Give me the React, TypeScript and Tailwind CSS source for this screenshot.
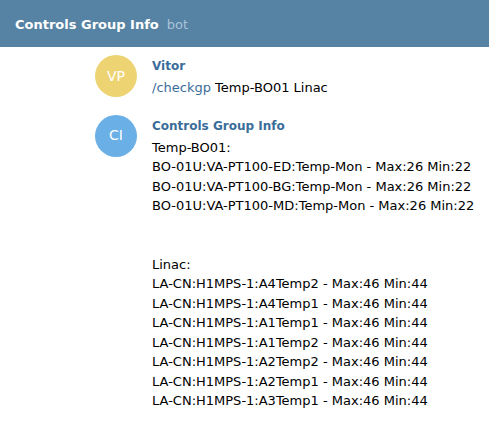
import React from 'react';

interface ChatMessage {
  initials: string;
  avatarColor: string;
  author: string;
  command?: string;
  lines: string[];
}

const messages: ChatMessage[] = [
  {
    initials: 'VP',
    avatarColor: 'bg-[#eed373]',
    author: 'Vitor',
    command: '/checkgp',
    lines: ['Temp-BO01 Linac'],
  },
  {
    initials: 'CI',
    avatarColor: 'bg-[#6aafe6]',
    author: 'Controls Group Info',
    lines: [
      'Temp-BO01:',
      'BO-01U:VA-PT100-ED:Temp-Mon - Max:26 Min:22',
      'BO-01U:VA-PT100-BG:Temp-Mon - Max:26 Min:22',
      'BO-01U:VA-PT100-MD:Temp-Mon - Max:26 Min:22',
      '',
      '',
      'Linac:',
      'LA-CN:H1MPS-1:A4Temp2 - Max:46 Min:44',
      'LA-CN:H1MPS-1:A4Temp1 - Max:46 Min:44',
      'LA-CN:H1MPS-1:A1Temp1 - Max:46 Min:44',
      'LA-CN:H1MPS-1:A1Temp2 - Max:46 Min:44',
      'LA-CN:H1MPS-1:A2Temp2 - Max:46 Min:44',
      'LA-CN:H1MPS-1:A2Temp1 - Max:46 Min:44',
      'LA-CN:H1MPS-1:A3Temp1 - Max:46 Min:44',
    ],
  },
];

const App: React.FC = () => {
  return (
    <div className="w-[489px] h-[423px] bg-white overflow-hidden font-['DejaVu_Sans',sans-serif]">
      <div className="h-[47px] bg-[#5682a3] flex items-center pl-[15px] pt-[2px]">
        <span className="text-white font-bold text-[13px]">Controls Group Info</span>
        <span className="text-[#a9c3d9] text-[13px] ml-[8px]">bot</span>
      </div>

      <div className="pl-[95px] pt-[8px] flex flex-col gap-[17px]">
        {messages.map((msg) => (
          <div key={msg.author} className="flex gap-[15px]">
            <div
              className={`w-[42px] h-[42px] shrink-0 rounded-full ${msg.avatarColor} flex items-center justify-center text-white text-[14px]`}
            >
              {msg.initials}
            </div>
            <div className="flex flex-col pt-[1px]">
              <div className="text-[#3a6d99] font-bold text-[12px] leading-[21px]">{msg.author}</div>
              <div className="text-black text-[13px] leading-[19.5px] mt-[1px]">
                {msg.lines.map((line, i) => (
                  <div key={i} className="h-[19.5px] whitespace-pre">
                    {msg.command && i === 0 && (
                      <span className="text-[#3a6d99]">{msg.command} </span>
                    )}
                    {line}
                  </div>
                ))}
              </div>
            </div>
          </div>
        ))}
      </div>
    </div>
  );
};

export default App;
